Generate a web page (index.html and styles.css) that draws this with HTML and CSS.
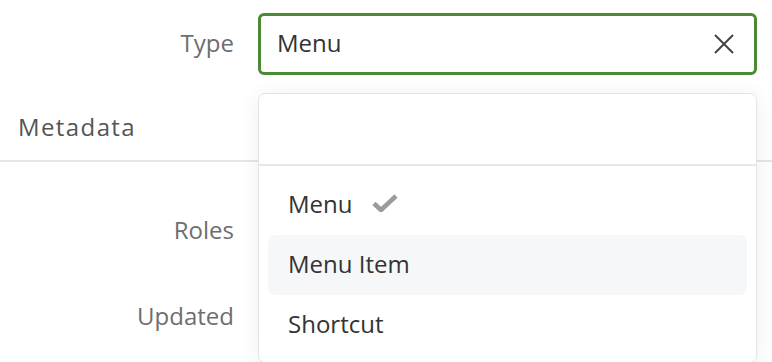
FILE: index.html
```html
<!DOCTYPE html>
<html lang="en">
<head>
    <meta charset="UTF-8">
    <title>Edit Item</title>
    <link rel="stylesheet" href="styles.css">
</head>
<body>
    <form class="item-form">
        <!-- Type -->
        <div class="field-row first">
            <label class="field-label">Type</label>
            <div class="select">
                <div class="select-box focused">
                    <span class="select-value">Menu</span>
                    <svg class="clear-icon" width="22" height="22" viewBox="0 0 22 22">
                        <path d="M2 2L20 20M20 2L2 20" stroke="#444" stroke-width="2" fill="none"/>
                    </svg>
                </div>

                <!-- Open dropdown -->
                <div class="dropdown">
                    <div class="dropdown-search"></div>
                    <ul class="dropdown-list">
                        <li class="option selected">Menu
                            <svg class="check" width="26" height="18" viewBox="0 0 26 18">
                                <path d="M2 9.5L9 16L24 2" stroke="#9b9b9b" stroke-width="4.5" fill="none" stroke-linejoin="round"/>
                            </svg>
                        </li>
                        <li class="option hover">Menu Item</li>
                        <li class="option">Shortcut</li>
                    </ul>
                </div>
            </div>
        </div>

        <!-- Metadata -->
        <h2 class="section-title">Metadata</h2>

        <div class="field-row">
            <label class="field-label">Roles</label>
            <div class="select-box"></div>
        </div>

        <div class="field-row">
            <label class="field-label">Updated</label>
            <div class="select-box"></div>
        </div>
    </form>
</body>
</html>
```

FILE: styles.css
```css
/* General */
body {
    margin: 0;
    font-family: "Open Sans", Lato, sans-serif;
    background: #fff;
    color: #333;
}

.item-form {
    padding: 13px 15px 0 0;
}

/* Rows */
.field-row {
    display: grid;
    grid-template-columns: 234px 1fr;
    column-gap: 24px;
    align-items: center;
    margin-bottom: 24px;
}

.field-row.first {
    margin-bottom: 0;
}

.field-label {
    text-align: right;
    font-size: 24px;
    color: #6e6e6e;
    padding-bottom: 4px;
}

/* Select */
.select {
    position: relative;
}

.select-box {
    box-sizing: border-box;
    height: 62px;
    border: 1px solid #dcdce0;
    border-radius: 6px;
    display: flex;
    align-items: center;
    padding: 0 17px 0 17px;
}

.select-box.focused {
    border: 3px solid #4a8a37;
    padding: 0 17px 0 16px;
}

.select-value {
    flex: 1;
    font-size: 24px;
    color: #333;
    padding-bottom: 3px;
}

.clear-icon {
    margin-right: 2px;
}

/* Section */
.section-title {
    margin: 37px -15px 0 0;
    padding: 0 0 18px 18px;
    font-size: 24px;
    font-weight: normal;
    letter-spacing: 1.4px;
    line-height: 30px;
    color: #555;
    border-bottom: 2px solid #e6e6ea;
}

.section-title + .field-row {
    margin-top: 38px;
}

/* Dropdown */
.dropdown {
    position: absolute;
    z-index: 2;
    top: calc(100% + 18px);
    left: 0;
    right: 0;
    height: 268px;
    background: #fff;
    border: 1px solid #e4e4e9;
    border-radius: 7px;
    box-shadow: 0 2px 22px rgba(0, 0, 0, 0.07);
    overflow: hidden;
}

.dropdown-search {
    height: 70px;
    border-bottom: 2px solid #e8e8ec;
}

.dropdown-list {
    list-style: none;
    margin: 0;
    padding: 9px 9px;
}

.option {
    box-sizing: border-box;
    height: 60px;
    display: flex;
    align-items: center;
    padding: 0 0 3px 20px;
    border-radius: 7px;
    font-size: 24px;
    color: #333;
}

.option.hover {
    background: #f6f7f9;
}

.check {
    margin-left: 19px;
    margin-top: -2px;
}
```
